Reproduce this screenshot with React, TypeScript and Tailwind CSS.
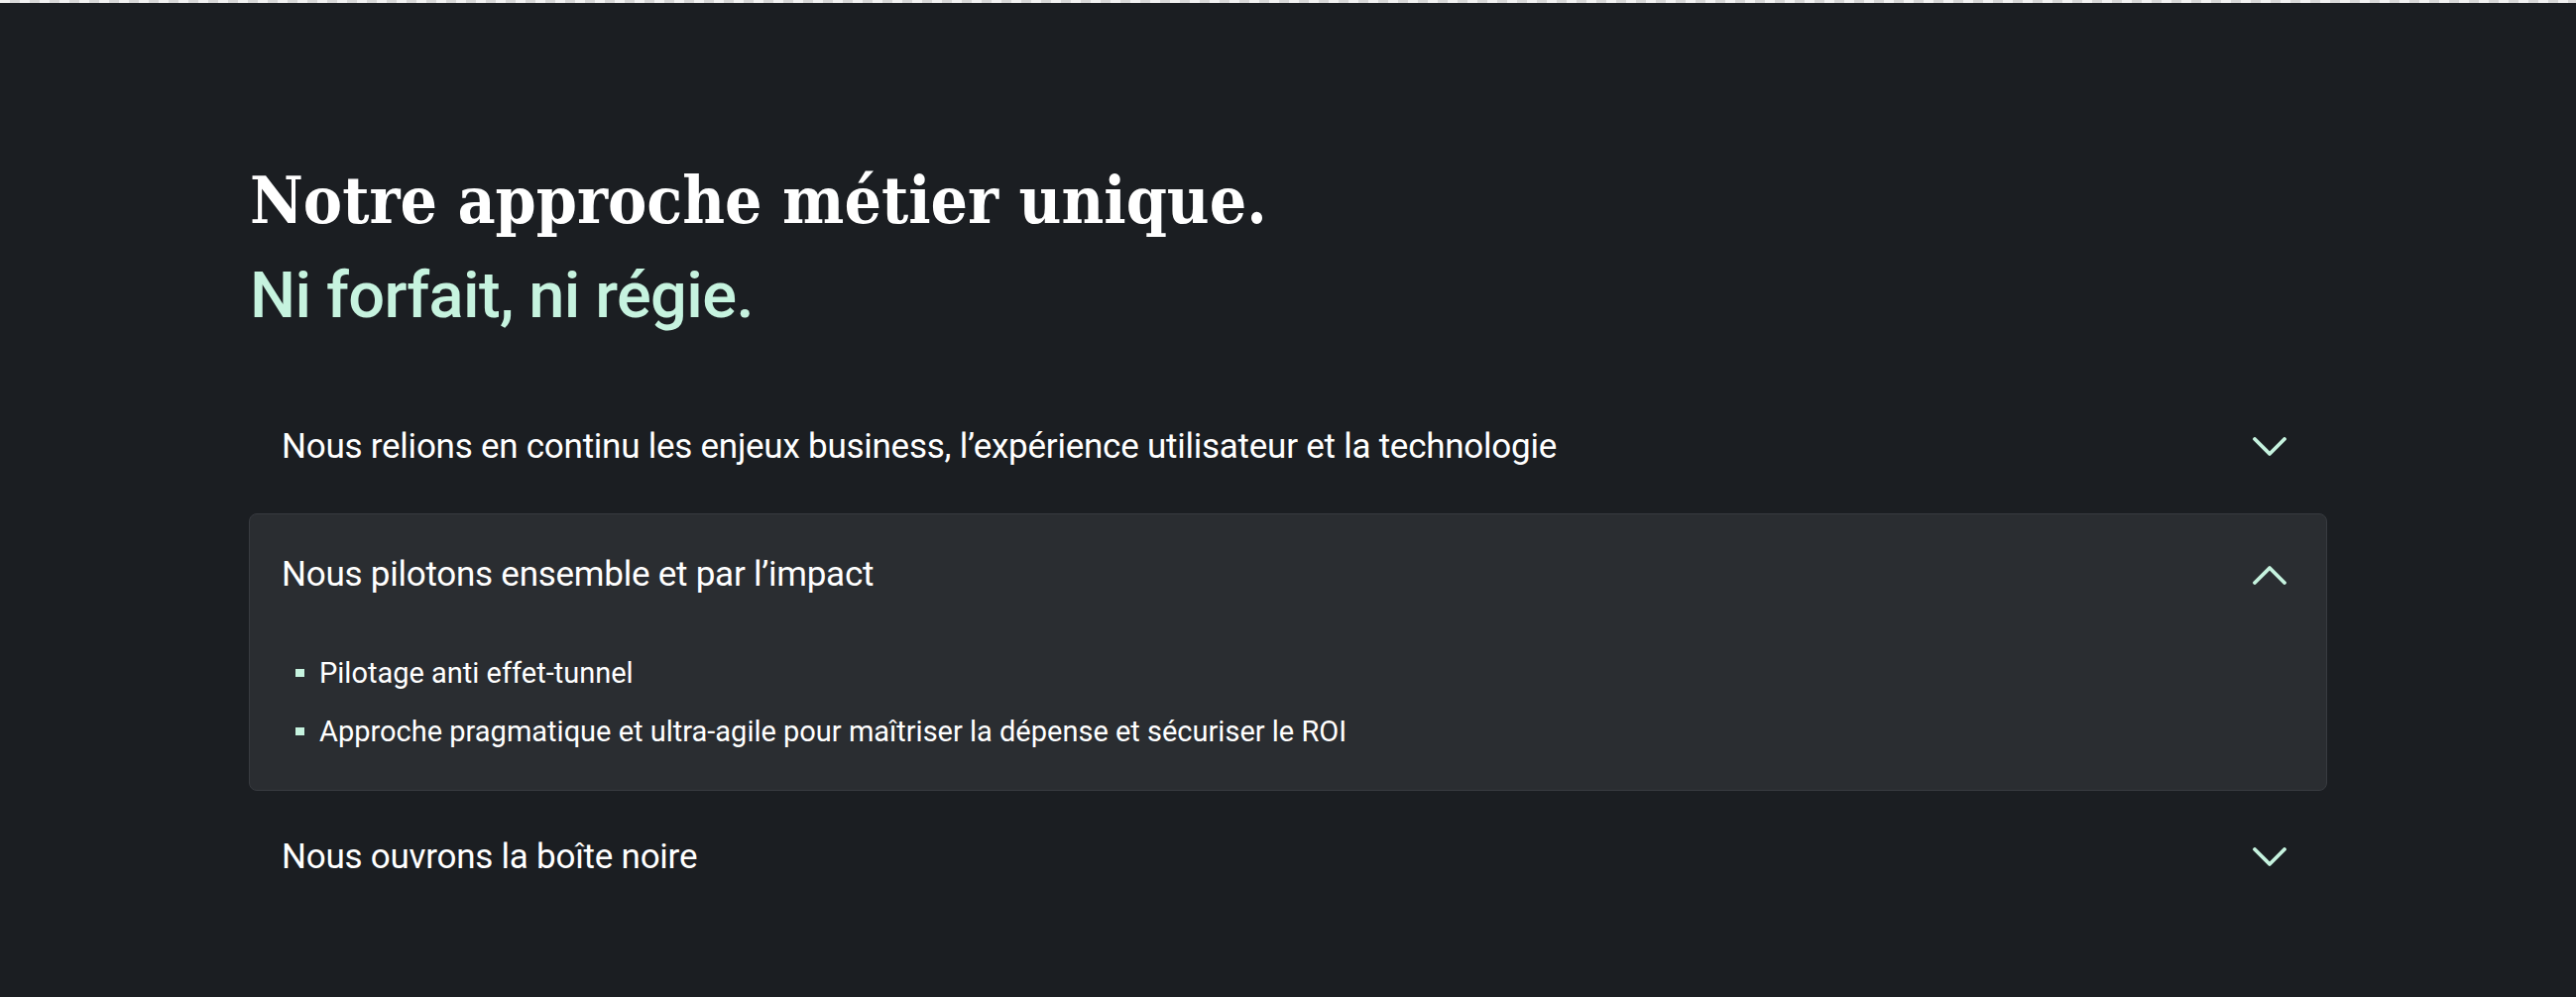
import React from "react";

const Chevron = ({ up }: { up?: boolean }) => (
  <svg width="34" height="20" viewBox="0 0 34 20" fill="none" className="shrink-0">
    <polyline
      points={up ? "2,18 17,3 32,18" : "2,2 17,17 32,2"}
      stroke="#c6f3df"
      strokeWidth="3.8"
      strokeLinecap="round"
      strokeLinejoin="round"
    />
  </svg>
);

export default function App() {
  const font = { fontFamily: "Roboto, 'Noto Sans', sans-serif" };
  return (
    <div className="min-h-screen bg-[#1b1e22]" style={font}>
      <div className="h-[3px] bg-[repeating-linear-gradient(90deg,#f2f2f2_0_10px,#d8d8d8_10px_20px)]" />
      <div className="mx-auto w-[2096px] pt-[164px]">
        <h2 className="text-[65.5px] leading-[70px] font-bold text-white font-['DejaVu_Serif_Condensed','DejaVu_Serif',serif] pl-[1px]">
          Notre approche métier unique.
        </h2>
        <p className="mt-[29px] text-[65px] leading-[65px] font-medium text-[#c6f3df] tracking-[-0.01em] font-['Roboto',sans-serif] pl-[1px]">
          Ni forfait, ni régie.
        </p>

        <div className="mt-[59px] flex flex-col gap-[6px]">
          <div className="flex h-[122px] items-center justify-between pl-[33px] pr-[41px]">
            <span className="text-[35px] leading-[40px] text-white tracking-[-0.007em]">
              Nous relions en continu les enjeux business, l’expérience utilisateur et la technologie
            </span>
            <Chevron />
          </div>

          <div className="rounded-[8px] border border-[#383b40] bg-[#2a2d31]">
            <div className="flex h-[121px] items-center justify-between pl-[32px] pr-[40px]">
              <span className="text-[35px] leading-[40px] text-white tracking-[-0.007em]">
                Nous pilotons ensemble et par l’impact
              </span>
              <Chevron up />
            </div>
            <ul className="flex flex-col gap-[19px] pl-[46px] pb-[39px] pt-[19px]">
              {[
                "Pilotage anti effet-tunnel",
                "Approche pragmatique et ultra-agile pour maîtriser la dépense et sécuriser le ROI",
              ].map((t) => (
                <li key={t} className="flex h-[40px] items-center gap-[15px] text-[29px] leading-[40px] text-white">
                  <span className="h-[8px] w-[9px] bg-[#c6f3df] shrink-0" />
                  <span>{t}</span>
                </li>
              ))}
            </ul>
          </div>

          <div className="flex h-[122px] items-center justify-between pl-[33px] pr-[41px]">
            <span className="text-[35px] leading-[40px] text-white tracking-[-0.007em]">
              Nous ouvrons la boîte noire
            </span>
            <Chevron />
          </div>
        </div>
      </div>
    </div>
  );
}
